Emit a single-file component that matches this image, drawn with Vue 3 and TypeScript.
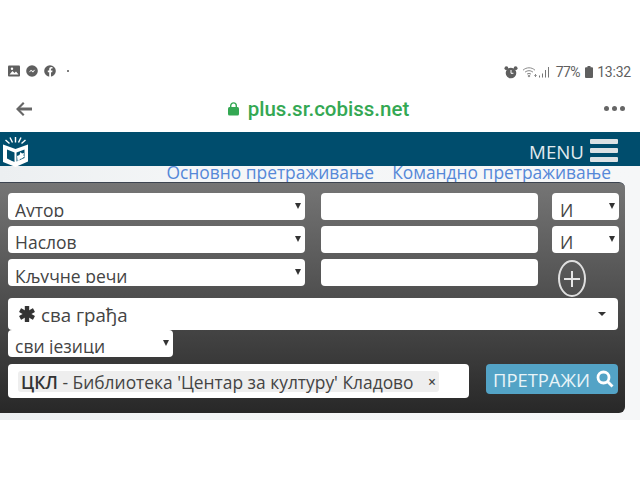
<template>
  <div class="screen">
    <div class="statusbar">
      <div class="status-left">
        <svg width="12" height="12" viewBox="0 0 12 12"><rect width="12" height="11" y="0.5" rx="1" fill="#5f5f5f" /><path d="M1.5 9.5 4.5 6l2 2 1.5-1.500 2.500 3z" fill="#fff" /><circle cx="4" cy="3.8" r="1.2" fill="#fff" /></svg>
        <svg width="12" height="12" viewBox="0 0 12 12"><circle cx="6" cy="6" r="5.8" fill="#5f5f5f" /><path d="M2.6 7.6 5 4.8l1.6 1.3 2.8-1.5-2.4 2.8-1.7-1.3z" fill="#fff" /></svg>
        <svg width="12" height="12" viewBox="0 0 12 12"><circle cx="6" cy="6" r="5.8" fill="#5f5f5f" /><path d="M5.2 12V7.2H3.8V5.4h1.4V4.2c0-1.5.9-2.3 2.2-2.3h1.1v1.7h-.8c-.6 0-.8.3-.8.8v1h1.6l-.3 1.8H7V12z" fill="#fff" /></svg>
        <span class="dot"></span>
      </div>
      <div class="status-right">
        <svg width="14" height="13" viewBox="0 0 14 13"><circle cx="7" cy="7" r="5.3" fill="#5f5f5f" /><circle cx="2.4" cy="2.2" r="1.9" fill="#5f5f5f" /><circle cx="11.6" cy="2.2" r="1.9" fill="#5f5f5f" /><path d="M7 4v3.3h2.4" fill="none" stroke="#fff" stroke-width="1" /></svg>
        <svg class="wifi" width="16" height="12" viewBox="0 0 16 12" fill="none" stroke="#8a8a8a" stroke-width="1"><path d="M1 4.2C4.5 1 9.5 1 13 4.2M3 6.2c2.500-2 5.500-2 8 0M5 8.200c1.300-1 2.700-1 4 0" /><circle cx="7" cy="10" r=".8" fill="#8a8a8a" /><path d="M13.500 8v3M12.300 9.500h2.400" /></svg>
        <svg class="signal" width="11" height="12" viewBox="0 0 11 12" fill="#777"><rect x="0" y="9.500" width="1" height="2" /><rect x="3" y="7.500" width="1" height="4" /><rect x="6" y="4" width="1" height="7.500" /><rect x="9" y="1" width="1" height="10.500" /></svg>
        <span class="percent">77%</span>
        <svg width="8" height="12" viewBox="0 0 8 12"><path d="M2.500 0h3v1.200H7a1 1 0 0 1 1 1V11a1 1 0 0 1-1 1H1a1 1 0 0 1-1-1V2.200a1 1 0 0 1 1-1h1.500z" fill="#5f5f5f" /></svg>
        <span class="clock">13:32</span>
      </div>
    </div>

    <div class="toolbar">
      <svg class="back" width="18" height="14" viewBox="0 0 18 14"><path d="M17 7H4" fill="none" stroke="#666" stroke-width="3" /><path d="M8 0 1 7l7 7 1.500-1.500L4 7l5.500-5.500z" fill="#666" /></svg>
      <div class="url">
        <svg width="11" height="14" viewBox="0 0 11 14"><rect y="5" width="11" height="8.500" rx="1.500" fill="#34a853" /><path d="M2.700 5.500V3.700a2.800 2.800 0 0 1 5.600 0v1.800" fill="none" stroke="#34a853" stroke-width="1.400" /></svg>
        <span>plus.sr.cobiss.net</span>
      </div>
      <div class="more"><i></i><i></i><i></i></div>
    </div>

    <header class="site-header">
      <svg class="logo" width="25" height="30" viewBox="0 0 25 30">
        <path d="M7 .5l2.500 5M12.500 0v5.500M18 .5l-2.500 5M2.500 3l4 3.500M22.500 3l-4 3.500" stroke="#fff" stroke-width="1.400" fill="none" />
        <path d="M0 7.500l12.500 4.500L25 7.500v17L12.500 30 0 25z" fill="#fff" />
        <path d="M4 12.500l7.500 3V25L7.500 23.200 4 21.500z" fill="#004d6d" />
        <path d="M13.500 15.500l8-3v8.500l-8 3.500z" fill="#004d6d" />
        <path d="M14 19l2.500-1 1-3 1.500 1.500 2-.5-.5 2.500 1 1-2.500 2-2 .5-.5 1.500-2 .5z" fill="#fff" />
      </svg>
      <div class="menu">
        <span>MENU</span>
        <div class="burger"><i></i><i></i><i></i></div>
      </div>
    </header>

    <main class="content">
      <nav class="tabs">
        <a>Основно претраживање</a>
        <a>Командно претраживање</a>
      </nav>

      <section class="panel">
        <div class="rows">
          <div v-for="row in rows" :key="row.field" class="row">
            <div class="select field"><span>{{ row.field }}</span><b class="caret"></b></div>
            <div class="input"></div>
            <div v-if="row.op" class="select op"><span>{{ row.op }}</span><b class="caret"></b></div>
            <div v-else class="add"><svg width="16" height="16" viewBox="0 0 16 16"><path d="M8 0v16M0 8h16" stroke="#e6e6e6" stroke-width="2" /></svg></div>
          </div>
        </div>

        <div class="material">
          <svg width="16" height="16" viewBox="0 0 16 16" fill="#333"><g id="arms"><rect x="5.800" y="0" width="4.400" height="16" rx=".6" /><rect x="5.800" y="0" width="4.400" height="16" rx=".6" transform="rotate(60 8 8)" /><rect x="5.800" y="0" width="4.400" height="16" rx=".6" transform="rotate(120 8 8)" /></g></svg>
          <span>сва грађа</span>
          <b class="caret wide"></b>
        </div>

        <div class="select language"><span>сви језици</span><b class="caret"></b></div>

        <div class="bottom">
          <div class="library">
            <div class="tag">
              <strong>ЦКЛ</strong>
              <span>&nbsp;- Библиотека 'Центар за културу' Кладово</span>
              <em>×</em>
            </div>
          </div>
          <button class="search" type="button">
            ПРЕТРАЖИ
            <svg width="18" height="18" viewBox="0 0 18 18" fill="none" stroke="#fff" stroke-width="2.800"><circle cx="7.500" cy="7.500" r="5.500" /><path d="M11.500 11.500l5 5" /></svg>
          </button>
        </div>
      </section>
    </main>
  </div>
</template>

<script setup lang="ts">
interface SearchRow {
  field: string;
  op?: string;
}

const rows: SearchRow[] = [
  { field: 'Аутор', op: 'И' },
  { field: 'Наслов', op: 'И' },
  { field: 'Кључне речи' },
];
</script>

<style scoped>
.screen {
  width: 640px;
  height: 480px;
  background: #fff;
  overflow: hidden;
  font-family: "Open Sans", "Liberation Sans", sans-serif;
}

.statusbar {
  height: 84px;
  box-sizing: border-box;
  padding: 64px 9px 0 8px;
  display: flex;
  justify-content: space-between;
  align-items: flex-start;
}

.status-left {
  display: flex;
  align-items: center;
  gap: 6px;
  height: 14px;
}

.dot {
  width: 2px;
  height: 2px;
  border-radius: 50%;
  background: #555;
  margin-left: 5px;
}

.status-right {
  display: flex;
  align-items: center;
  gap: 3px;
  height: 16px;
  font-family: Roboto, sans-serif;
  font-size: 14px;
  color: #5f5f5f;
}

.wifi {
  margin-left: 1px;
}

.signal {
  margin-left: -2px;
  margin-right: 3px;
}

.percent {
  letter-spacing: -0.5px;
  margin-right: 2px;
}

.clock {
  margin-left: 1px;
  letter-spacing: -0.2px;
}

.toolbar {
  height: 48px;
  position: relative;
  display: flex;
  justify-content: center;
  align-items: center;
}

.back {
  position: absolute;
  left: 15px;
  top: 18px;
}

.url {
  display: flex;
  align-items: center;
  gap: 9px;
  margin: 2px 3px 0 0;
  font-family: Roboto, sans-serif;
  font-weight: 500;
  font-size: 20.500px;
  color: #34a853;
}

.more {
  position: absolute;
  right: 15px;
  top: 22px;
  display: flex;
  gap: 3px;
}

.more i {
  width: 5px;
  height: 5px;
  border-radius: 50%;
  background: #666;
}

.site-header {
  height: 34px;
  background: #004d6d;
  display: flex;
  justify-content: space-between;
  padding: 0 22px 0 3px;
}

.logo {
  margin-top: 5px;
}

.menu {
  display: flex;
  align-items: center;
  gap: 6px;
  color: #e1eaee;
  font-size: 18.700px;
}

.menu span {
  margin-top: 4px;
}

.burger {
  width: 28px;
  display: flex;
  flex-direction: column;
  gap: 4px;
  margin-top: 3px;
}

.burger i {
  display: block;
  height: 5px;
  border-radius: 1px;
  background: #dde2e4;
}

.content {
  height: 254px;
  background: linear-gradient(90deg, #eceff1, #f4f6f7 30%, #f6f7f8);
}

.tabs {
  height: 16px;
  display: flex;
  justify-content: flex-end;
  gap: 18px;
  padding-right: 29px;
  font-size: 17.400px;
  line-height: 13px;
  color: #5588d8;
  white-space: nowrap;
}

.panel {
  position: relative;
  width: 625px;
  height: 231px;
  box-sizing: border-box;
  padding: 10px 6px 0 8px;
  background: linear-gradient(#757575, #282828);
  border-top: 1px solid #3c4450;
  border-radius: 0 6px 6px 0;
}

.rows {
  display: flex;
  flex-direction: column;
  gap: 6px;
}

.row {
  display: flex;
  height: 27px;
}

.select {
  position: relative;
  height: 27px;
  box-sizing: border-box;
  background: #fff;
  border-radius: 4px;
  padding-left: 7px;
  font-size: 17.500px;
  color: #444;
}

.select span {
  display: block;
  height: 24px;
  overflow: hidden;
  line-height: 33px;
}

.row:first-child .select span,
.row:last-child .select span {
  line-height: 35px;
}

.row:nth-child(2) .select span {
  line-height: 32px;
}

.caret {
  position: absolute;
  right: 4px;
  top: 10px;
  border-left: 3px solid transparent;
  border-right: 3px solid transparent;
  border-top: 6px solid #333;
}

.field {
  width: 297px;
}

.input {
  width: 217px;
  margin-left: 16px;
  background: #fff;
  border-radius: 4px;
}

.op {
  width: 67px;
  margin-left: 14px;
  padding-left: 8px;
}

.add {
  width: 24px;
  height: 33px;
  margin: 1px 0 -7px 20px;
  border: 2px solid #dfdfdf;
  border-radius: 50%;
  display: flex;
  align-items: center;
  justify-content: center;
}

.material {
  position: relative;
  height: 32px;
  margin: 12px 1px 0 0;
  background: #fff;
  border-radius: 4px;
  display: flex;
  align-items: center;
  gap: 6px;
  padding-left: 11px;
  font-size: 18.700px;
  color: #444;
}

.caret.wide {
  right: 12px;
  top: 14px;
  border-left-width: 4px;
  border-right-width: 4px;
  border-top-width: 4px;
}

.language {
  width: 165px;
}

.bottom {
  display: flex;
  align-items: flex-start;
  margin-top: 7px;
}

.library {
  width: 461px;
  height: 34px;
  box-sizing: border-box;
  padding: 7px 0 0 10px;
  background: #fff;
  border-radius: 4px;
}

.tag {
  width: 421px;
  height: 21px;
  box-sizing: border-box;
  padding-left: 3px;
  display: flex;
  align-items: center;
  white-space: nowrap;
  background: #eee;
  border-radius: 3px;
  font-size: 17.400px;
  color: #444;
}

.tag strong {
  font-weight: 600;
  color: #333;
}

.tag em {
  margin-left: auto;
  margin-right: 3px;
  font-style: normal;
  font-weight: 600;
  font-size: 14px;
}

.search {
  width: 132px;
  height: 30px;
  margin-left: 17px;
  padding: 0 0 0 7px;
  display: flex;
  align-items: center;
  gap: 6px;
  border: 0;
  border-radius: 4px;
  background: #53a3c6;
  color: #e8f4f8;
  font-family: inherit;
  font-size: 18.400px;
  white-space: nowrap;
}
</style>
